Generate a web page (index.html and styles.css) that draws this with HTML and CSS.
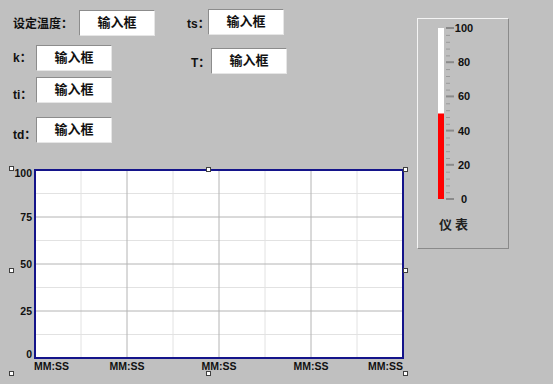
FILE: index.html
```html
<!DOCTYPE html>
<html lang="zh">
<head>
    <meta charset="UTF-8">
    <title>温度控制</title>
    <link rel="stylesheet" href="styles.css">
</head>
<body>
    <div class="app">
        <div class="main">
            <div class="form">
                <div class="col col-left">
                    <div class="field">
                        <label class="lbl lbl-wide">设定温度：</label>
                        <div class="input-box">输入框</div>
                    </div>
                    <div class="field row-k">
                        <label class="lbl">k：</label>
                        <div class="input-box">输入框</div>
                    </div>
                    <div class="field row-ti">
                        <label class="lbl low">ti：</label>
                        <div class="input-box">输入框</div>
                    </div>
                    <div class="field row-td">
                        <label class="lbl low">td：</label>
                        <div class="input-box">输入框</div>
                    </div>
                </div>
                <div class="col col-right">
                    <div class="field">
                        <label class="lbl lbl-ts">ts：</label>
                        <div class="input-box">输入框</div>
                    </div>
                    <div class="field row-T">
                        <label class="lbl lbl-T">T：</label>
                        <div class="input-box">输入框</div>
                    </div>
                </div>
            </div>

            <!-- trend chart, coordinates are page y - 160 -->
            <svg class="chart" width="417" height="224" viewBox="0 0 417 224">
                <rect x="35" y="10" width="368" height="188" fill="#fff"/>
                <g stroke="#e2e2e2" stroke-width="1">
                    <line x1="81" y1="10" x2="81" y2="198"/>
                    <line x1="173" y1="10" x2="173" y2="198"/>
                    <line x1="265" y1="10" x2="265" y2="198"/>
                    <line x1="357" y1="10" x2="357" y2="198"/>
                    <line x1="35" y1="33.5" x2="403" y2="33.5"/>
                    <line x1="35" y1="80.5" x2="403" y2="80.5"/>
                    <line x1="35" y1="127.5" x2="403" y2="127.5"/>
                    <line x1="35" y1="174.5" x2="403" y2="174.5"/>
                </g>
                <g stroke="#b4b4b4" stroke-width="1">
                    <line x1="127" y1="10" x2="127" y2="198"/>
                    <line x1="219" y1="10" x2="219" y2="198"/>
                    <line x1="311" y1="10" x2="311" y2="198"/>
                    <line x1="35" y1="57" x2="403" y2="57"/>
                    <line x1="35" y1="104" x2="403" y2="104"/>
                    <line x1="35" y1="151" x2="403" y2="151"/>
                </g>
                <rect x="35" y="10" width="368" height="188" fill="none" stroke="#14148a" stroke-width="2"/>

                <g class="axis" text-anchor="end">
                    <text x="32" y="17">100</text>
                    <text x="32" y="61">75</text>
                    <text x="32" y="108">50</text>
                    <text x="32" y="155">25</text>
                    <text x="32" y="198">0</text>
                </g>
                <g class="axis">
                    <text x="34" y="210">MM:SS</text>
                    <text x="127" y="210" text-anchor="middle">MM:SS</text>
                    <text x="219" y="210" text-anchor="middle">MM:SS</text>
                    <text x="311" y="210" text-anchor="middle">MM:SS</text>
                    <text x="403" y="210" text-anchor="end">MM:SS</text>
                </g>

                <!-- selection handles -->
                <g fill="#fff" stroke="#404040" stroke-width="1">
                    <rect x="9.5" y="6.5" width="4" height="4"/>
                    <rect x="206.5" y="7.5" width="4" height="4"/>
                    <rect x="403.5" y="7.5" width="4" height="4"/>
                    <rect x="9.5" y="108.5" width="4" height="4"/>
                    <rect x="403.5" y="108.5" width="4" height="4"/>
                    <rect x="9.5" y="211.5" width="4" height="4"/>
                    <rect x="206.5" y="211.5" width="4" height="4"/>
                    <rect x="403.5" y="211.5" width="4" height="4"/>
                </g>
            </svg>
        </div>

        <div class="gauge">
            <svg class="gauge-scale" width="90" height="190" viewBox="0 0 90 190">
                <rect x="20" y="9" width="6" height="171" fill="#fff"/>
                <rect x="20" y="94.5" width="6" height="85.5" fill="#f00"/>
                <g stroke="#8a8a8a" stroke-width="2">
                    <line x1="28" y1="9" x2="36" y2="9"/>
                    <line x1="28" y1="43.2" x2="36" y2="43.2"/>
                    <line x1="28" y1="77.4" x2="36" y2="77.4"/>
                    <line x1="28" y1="111.6" x2="36" y2="111.6"/>
                    <line x1="28" y1="145.8" x2="36" y2="145.8"/>
                    <line x1="28" y1="180" x2="36" y2="180"/>
                </g>
                <g stroke="#9a9a9a" stroke-width="1">
                    <line x1="28" y1="16.4" x2="32" y2="16.4"/>
                    <line x1="28" y1="23.3" x2="32" y2="23.3"/>
                    <line x1="28" y1="30.1" x2="32" y2="30.1"/>
                    <line x1="28" y1="36.9" x2="32" y2="36.9"/>
                    <line x1="28" y1="50.6" x2="32" y2="50.6"/>
                    <line x1="28" y1="57.5" x2="32" y2="57.5"/>
                    <line x1="28" y1="64.3" x2="32" y2="64.3"/>
                    <line x1="28" y1="71.1" x2="32" y2="71.1"/>
                    <line x1="28" y1="84.8" x2="32" y2="84.8"/>
                    <line x1="28" y1="91.7" x2="32" y2="91.7"/>
                    <line x1="28" y1="98.5" x2="32" y2="98.5"/>
                    <line x1="28" y1="105.3" x2="32" y2="105.3"/>
                    <line x1="28" y1="119" x2="32" y2="119"/>
                    <line x1="28" y1="125.9" x2="32" y2="125.9"/>
                    <line x1="28" y1="132.7" x2="32" y2="132.7"/>
                    <line x1="28" y1="139.5" x2="32" y2="139.5"/>
                    <line x1="28" y1="153.2" x2="32" y2="153.2"/>
                    <line x1="28" y1="160.1" x2="32" y2="160.1"/>
                    <line x1="28" y1="166.9" x2="32" y2="166.9"/>
                    <line x1="28" y1="173.7" x2="32" y2="173.7"/>
                </g>
                <g class="axis" text-anchor="middle">
                    <text x="46" y="13">100</text>
                    <text x="46" y="47">80</text>
                    <text x="46" y="81">60</text>
                    <text x="46" y="116">40</text>
                    <text x="46" y="150">20</text>
                    <text x="46" y="184">0</text>
                </g>
            </svg>
            <div class="gauge-title">仪 表</div>
        </div>
    </div>
</body>
</html>
```

FILE: styles.css
```css
body {
    margin: 0;
    width: 553px;
    height: 384px;
    overflow: hidden;
    background: #c0c0c0;
    color: #111;
    font-family: "Liberation Sans", "Noto Sans CJK SC", sans-serif;
}
.app {
    display: flex;
    align-items: flex-start;
}
.main {
    width: 417px;
}
.form {
    height: 160px;
    display: grid;
    grid-template-columns: 174px 1fr;
}
.col {
    display: flex;
    flex-direction: column;
}
.col-left {
    padding: 10px 0 0 13px;
}
.col-right {
    padding: 9px 0 0 13px;
}
.field {
    display: flex;
    align-items: center;
}
.row-k {
    margin-top: 9px;
}
.row-ti {
    margin-top: 6px;
}
.row-td {
    margin-top: 14px;
}
.row-T {
    margin-top: 13px;
    padding-left: 4px;
}
.lbl {
    width: 23px;
    font-size: 12px;
    line-height: 12px;
    font-weight: bold;
    font-family: "Liberation Sans", "Noto Sans CJK SC", sans-serif;
}
.lbl-wide {
    width: 66px;
    font-family: "Noto Sans CJK SC", sans-serif;
}
.lbl-ts {
    width: 21px;
    margin-top: 3px;
}
.lbl-T {
    width: 20px;
    margin-top: 3px;
}
.low {
    align-self: flex-end;
    margin-bottom: 2px;
}
.input-box {
    width: 76px;
    height: 26px;
    box-sizing: border-box;
    padding-top: 3px;
    background: #fff;
    border-top: 1px solid #8c8c8c;
    border-left: 1px solid #8c8c8c;
    border-right: 1px solid #e6e6e6;
    border-bottom: 1px solid #e6e6e6;
    text-align: center;
    font-family: "Noto Sans CJK SC", sans-serif;
    font-size: 13px;
    line-height: 15px;
    font-weight: bold;
    color: #111;
}
.chart {
    display: block;
}
.axis text {
    font-family: "Liberation Sans", sans-serif;
    font-size: 11px;
    font-weight: bold;
    fill: #111;
}
.chart .axis text {
    font-size: 10.5px;
}
.gauge {
    margin-top: 18px;
    width: 92px;
    height: 231px;
    box-sizing: border-box;
    border-top: 1px solid #f4f4f4;
    border-left: 1px solid #f4f4f4;
    border-right: 1px solid #8a8a8a;
    border-bottom: 1px solid #8a8a8a;
}
.gauge-scale {
    display: block;
}
.gauge-title {
    margin-top: 8px;
    padding-left: 21px;
    font-family: "Noto Sans CJK SC", sans-serif;
    font-size: 13px;
    line-height: 14px;
    font-weight: bold;
    color: #222;
}
```
